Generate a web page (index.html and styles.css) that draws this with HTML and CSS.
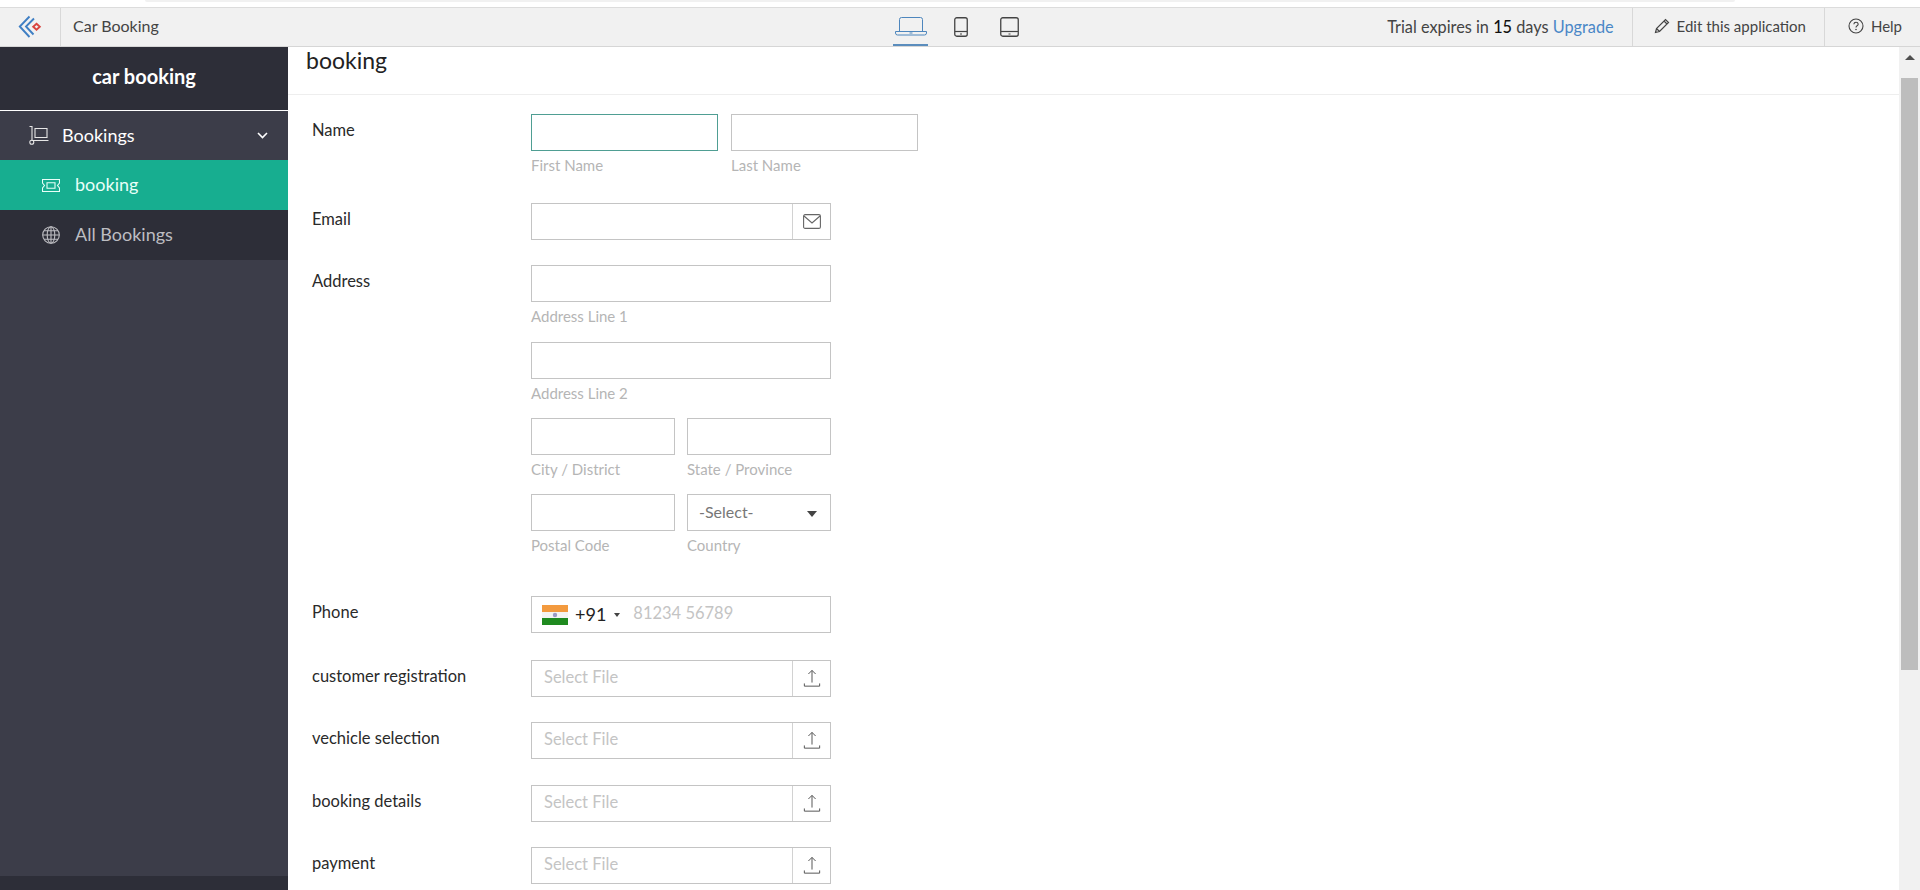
FILE: index.html
```html
<!DOCTYPE html>
<html lang="en">
<head>
    <meta charset="UTF-8">
    <meta name="viewport" content="width=device-width, initial-scale=1.0">
    <title>Car Booking</title>
    <link rel="stylesheet" href="styles.css">
</head>
<body>
    <svg class="defs" width="0" height="0">
        <symbol id="upload" viewBox="0 0 20 20">
            <path d="M10 1V14.500M6 5L10 1 14 5M1.500 15.500v3h17v-3" fill="none" stroke="currentColor" stroke-width="1.100"/>
        </symbol>
    </svg>

    <div class="topstrip"><div class="topstrip-shade"></div></div>

    <header class="toolbar">
        <div class="toolbar-left">
            <a class="logo">
                <svg width="24" height="24" viewBox="0 0 24 24">
                    <path d="M11.500 1.500L1.800 11.500l9.700 10.500" fill="none" stroke="#3f7fc4" stroke-width="1.900"/>
                    <path d="M16 3.500L8 11.500l7.500 8" fill="none" stroke="#3f7fc4" stroke-width="1.900"/>
                    <path d="M18.500 8.800l3.300 3-3.300 3-3.300-3z" fill="none" stroke="#d9443f" stroke-width="1.900"/>
                </svg>
            </a>
            <span class="app-name">Car Booking</span>
        </div>
        <div class="devices">
            <a class="device active">
                <svg width="32" height="19" viewBox="0 0 32 19">
                    <path d="M4.500 14V2.500q0-2 2-2h19q2 0 2 2V14" fill="none" stroke="#4d86bd" stroke-width="1"/>
                    <path d="M.5 14.500h31v1.500q0 2-2 2h-27q-2 0-2-2z" fill="none" stroke="#4d86bd" stroke-width="1"/>
                    <path d="M14.500 15.500h3v1h-3z" fill="#4d86bd"/>
                </svg>
            </a>
            <a class="device device-phone">
                <svg width="14" height="20" viewBox="0 0 14 20">
                    <rect x=".75" y=".75" width="12.500" height="18.500" rx="2" fill="none" stroke="#444" stroke-width="1.300"/>
                    <path d="M1 14.500h12" stroke="#444" stroke-width="1.200"/>
                    <path d="M6 16.500h2v1H6z" fill="#444"/>
                </svg>
            </a>
            <a class="device">
                <svg width="19" height="20" viewBox="0 0 19 20">
                    <rect x=".75" y=".75" width="17.500" height="18.500" rx="2" fill="none" stroke="#444" stroke-width="1.300"/>
                    <path d="M1 14.500h17" stroke="#444" stroke-width="1.200"/>
                    <path d="M8.500 16.500h2v1h-2z" fill="#444"/>
                </svg>
            </a>
        </div>
        <div class="toolbar-right">
            <div class="trial">Trial expires in <b>15</b> days <a class="upgrade">Upgrade</a></div>
            <a class="tool-btn edit">
                <svg width="16" height="16" viewBox="0 0 16 16">
                    <path d="M1.500 14.500l1-4L11.500 1.500l3 3-9 9zM2.500 10.500l3 3M10 3l3 3" fill="none" stroke="#444" stroke-width="1.200"/>
                </svg>
                Edit this application
            </a>
            <a class="tool-btn help">
                <svg width="16" height="16" viewBox="0 0 16 16">
                    <circle cx="8" cy="8" r="7" fill="none" stroke="#444" stroke-width="1.100"/>
                    <path d="M5.800 6.300q.2-2 2.200-2t2.200 1.800q0 1-1.100 1.700T8 9.500" fill="none" stroke="#444" stroke-width="1.100"/>
                    <circle cx="8" cy="11.500" r=".8" fill="#444"/>
                </svg>
                Help
            </a>
        </div>
    </header>

    <div class="layout">
        <aside class="sidebar">
            <div class="side-title">car booking</div>
            <a class="side-group">
                <svg width="20" height="19" viewBox="0 0 20 19">
                    <path d="M.5 .5h2.500V15M3 14.500h16.500M6 2.500h12v9H6z" fill="none" stroke="#e6e6e6" stroke-width="1.100"/>
                    <circle cx="2.800" cy="16.300" r="2" fill="none" stroke="#e6e6e6" stroke-width="1.100"/>
                </svg>
                <span>Bookings</span>
                <svg class="chev" width="11" height="7" viewBox="0 0 11 7">
                    <path d="M1 1l4.500 4.500L10 1" fill="none" stroke="#fff" stroke-width="1.600"/>
                </svg>
            </a>
            <a class="side-item current">
                <svg width="18" height="13" viewBox="0 0 18 13">
                    <path d="M.5 .5h17v3.500l-2 2.500 2 2.500v3.500H.5V9l2-2.500L.5 4z" fill="none" stroke="#e8fff8" stroke-width="1.100"/>
                    <path d="M5 3.800h8v5.400H5z" fill="none" stroke="#e8fff8" stroke-width="1.100"/>
                </svg>
                <span>booking</span>
            </a>
            <a class="side-item">
                <svg width="18" height="18" viewBox="0 0 18 18">
                    <g fill="none" stroke="#bdbdc2" stroke-width="1.100">
                        <circle cx="9" cy="9" r="8.300"/>
                        <ellipse cx="9" cy="9" rx="3.800" ry="8.300"/>
                        <path d="M9 .7v16.600M.7 9h16.600M2 4.800h14M2 13.200h14"/>
                    </g>
                </svg>
                <span>All Bookings</span>
            </a>
            <div class="side-fill"></div>
            <div class="side-foot"></div>
        </aside>

        <main class="content">
            <div class="page">
                <h1 class="page-title">booking</h1>
                <form class="form">
                    <div class="row row-name">
                        <label class="lbl">Name</label>
                        <div class="cols cols-wide">
                            <div>
                                <input class="box is-focus" type="text">
                                <div class="sub">First Name</div>
                            </div>
                            <div>
                                <input class="box" type="text">
                                <div class="sub">Last Name</div>
                            </div>
                        </div>
                    </div>

                    <div class="row row-email">
                        <label class="lbl">Email</label>
                        <div class="group">
                            <input type="text">
                            <span class="addon addon-mail">
                                <svg width="18" height="15" viewBox="0 0 18 15">
                                    <rect x=".6" y=".6" width="16.800" height="13.800" rx="1.500" fill="none" stroke="#666" stroke-width="1.100"/>
                                    <path d="M1 2l8 7 8-7" fill="none" stroke="#666" stroke-width="1.100"/>
                                </svg>
                            </span>
                        </div>
                    </div>

                    <div class="row row-address">
                        <label class="lbl">Address</label>
                        <div class="address">
                            <div class="addr-line">
                                <input class="box" type="text">
                                <div class="sub">Address Line 1</div>
                            </div>
                            <div class="addr-line">
                                <input class="box" type="text">
                                <div class="sub">Address Line 2</div>
                            </div>
                            <div class="addr-line cols">
                                <div>
                                    <input class="box" type="text">
                                    <div class="sub">City / District</div>
                                </div>
                                <div>
                                    <input class="box" type="text">
                                    <div class="sub">State / Province</div>
                                </div>
                            </div>
                            <div class="addr-line cols">
                                <div>
                                    <input class="box" type="text">
                                    <div class="sub">Postal Code</div>
                                </div>
                                <div>
                                    <div class="select">-Select-<span class="caret"></span></div>
                                    <div class="sub">Country</div>
                                </div>
                            </div>
                        </div>
                    </div>

                    <div class="row row-phone">
                        <label class="lbl">Phone</label>
                        <div class="group">
                            <span class="flag">
                                <svg width="26" height="20" viewBox="0 0 26 20">
                                    <rect width="26" height="7" fill="#f39a3e"/>
                                    <rect y="7" width="26" height="6" fill="#f4f4f4"/>
                                    <rect y="13" width="26" height="7" fill="#1f8a20"/>
                                    <circle cx="13" cy="10" r="2.200" fill="#9a9ac4"/>
                                </svg>
                            </span>
                            <span class="dial">+91</span>
                            <span class="dial-caret"></span>
                            <input class="phone-input" type="text" placeholder="81234 56789">
                        </div>
                    </div>

                    <div class="row row-file">
                        <label class="lbl">customer registration</label>
                        <div class="group">
                            <input class="file-input" type="text" placeholder="Select File">
                            <span class="addon"><svg width="18" height="19"><use href="#upload"/></svg></span>
                        </div>
                    </div>
                    <div class="row row-file">
                        <label class="lbl">vechicle selection</label>
                        <div class="group">
                            <input class="file-input" type="text" placeholder="Select File">
                            <span class="addon"><svg width="18" height="19"><use href="#upload"/></svg></span>
                        </div>
                    </div>
                    <div class="row row-file">
                        <label class="lbl">booking details</label>
                        <div class="group">
                            <input class="file-input" type="text" placeholder="Select File">
                            <span class="addon"><svg width="18" height="19"><use href="#upload"/></svg></span>
                        </div>
                    </div>
                    <div class="row row-file">
                        <label class="lbl">payment</label>
                        <div class="group">
                            <input class="file-input" type="text" placeholder="Select File">
                            <span class="addon"><svg width="18" height="19"><use href="#upload"/></svg></span>
                        </div>
                    </div>
                </form>
            </div>
            <div class="scrollbar">
                <span class="scroll-up"></span>
                <div class="scroll-thumb"></div>
            </div>
        </main>
    </div>
</body>
</html>
```

FILE: styles.css
```css
* {
    box-sizing: border-box;
}

html, body {
    height: 100%;
}

body {
    margin: 0;
    display: flex;
    flex-direction: column;
    overflow: hidden;
    font-family: Lato, "Open Sans", sans-serif;
    font-size: 15px;
    color: #222;
    background-color: #fff;
}

.defs {
    display: none;
}

/* strip above the toolbar */
.topstrip {
    flex: 0 0 8px;
    border-bottom: 1px solid #dcdcdc;
    background-color: #fff;
}

.topstrip-shade {
    height: 2px;
    margin: 0 185px 0 145px;
    background-color: #f1f1f1;
    border-radius: 0 0 6px 6px;
}

/* toolbar */
.toolbar {
    flex: 0 0 39px;
    display: flex;
    background-color: #f1f1f1;
    border-bottom: 1px solid #d6d6d6;
    color: #444;
}

.toolbar-left {
    flex: 0 0 893px;
    display: flex;
    align-items: center;
}

.logo {
    width: 61px;
    height: 100%;
    display: flex;
    align-items: center;
    justify-content: center;
    border-right: 1px solid #d8d8d8;
}

.app-name {
    margin-left: 12px;
    font-size: 16px;
    padding-bottom: 3px;
}

.devices {
    display: flex;
    align-items: center;
    height: 100%;
}

.device {
    height: 100%;
    display: flex;
    align-items: center;
    margin-right: 26px;
}

.device-phone {
    margin-right: 32px;
}

.device.active {
    width: 35px;
    justify-content: center;
    border-bottom: 2px solid #5b8dbd;
}

.toolbar-right {
    margin-left: auto;
    display: flex;
    align-items: center;
}

.trial {
    padding-right: 18px;
    font-size: 16.300px;
    padding-bottom: 1px;
}

.trial b {
    font-weight: 500;
    color: #111;
}

.upgrade {
    color: #4a87c7;
}

.tool-btn {
    height: 100%;
    display: flex;
    align-items: center;
    gap: 7px;
    border-left: 1px solid #d8d8d8;
    padding-bottom: 2px;
}

.edit {
    padding-left: 21px;
    padding-right: 18px;
}

.help {
    padding-left: 23px;
    padding-right: 18px;
}

/* main layout */
.layout {
    flex: 1;
    display: flex;
    min-height: 0;
}

.sidebar {
    flex: 0 0 288px;
    display: flex;
    flex-direction: column;
    background-color: #3c3d49;
    color: #fff;
    font-size: 18px;
}

.side-title {
    flex: 0 0 64px;
    padding-top: 17px;
    text-align: center;
    font-size: 20px;
    font-weight: 700;
    background-color: #2d2e38;
    border-bottom: 1px solid #fff;
}

.side-group {
    flex: 0 0 49px;
    display: flex;
    align-items: center;
    padding: 0 20px 0 29px;
    gap: 13px;
}

.side-group span,
.side-item span {
    position: relative;
    top: -1px;
}

.chev {
    margin-left: auto;
}

.side-item {
    flex: 0 0 50px;
    display: flex;
    align-items: center;
    padding-left: 42px;
    gap: 15px;
    background-color: #2d2e38;
    color: #bdbdc2;
}

.side-item.current {
    background-color: #17ae90;
    color: #e8fff8;
}

.side-fill {
    flex: 1;
}

.side-foot {
    flex: 0 0 14px;
    background-color: #2d2e38;
}

/* content */
.content {
    flex: 1;
    display: flex;
    min-width: 0;
    overflow: hidden;
}

.page {
    flex: 1;
    min-width: 0;
}

.page-title {
    margin: 0;
    height: 48px;
    padding: 0 0 0 18px;
    font-size: 23px;
    font-weight: 400;
    line-height: 26px;
    color: #222;
    border-bottom: 1px solid #eee;
}

.form {
    padding: 19px 0 0 24px;
}

.row {
    display: flex;
    align-items: flex-start;
}

.lbl {
    flex: 0 0 219px;
    padding-top: 6px;
    line-height: 20px;
    font-size: 16.500px;
    color: #2a2a2a;
}

.row-name {
    margin-bottom: 28px;
}

.row-email {
    margin-bottom: 25px;
}

.row-address {
    margin-bottom: 41px;
}

.row-phone {
    margin-bottom: 27px;
}

.row-file {
    margin-bottom: 25.300px;
}

.cols {
    display: grid;
    grid-template-columns: 144px 144px;
    gap: 12px;
}

.cols-wide {
    grid-template-columns: 187px 187px;
    gap: 13px;
}

.address {
    width: 300px;
}

.addr-line {
    margin-bottom: 15.500px;
}

.addr-line:nth-child(3) {
    margin-bottom: 15px;
}

.addr-line:last-child {
    margin-bottom: 0;
}

input {
    font-family: inherit;
    font-size: 16.500px;
    color: #222;
    outline: none;
}

input::placeholder {
    color: #c4c4c4;
    opacity: 1;
}

.box {
    display: block;
    width: 100%;
    height: 37px;
    border: 1px solid #c4c4c4;
    border-radius: 0;
    padding: 0 10px;
}

.box.is-focus {
    border-color: #4f9e93;
}

.sub {
    margin-top: 5px;
    line-height: 19px;
    font-size: 15px;
    color: #b5b5b5;
}

.select {
    position: relative;
    height: 37px;
    padding: 0 11px;
    line-height: 33px;
    border: 1px solid #c4c4c4;
    font-size: 16px;
    color: #777;
}

.caret {
    position: absolute;
    right: 13px;
    top: 16px;
    border-left: 5px solid transparent;
    border-right: 5px solid transparent;
    border-top: 6px solid #444;
}

.group {
    width: 300px;
    height: 37px;
    display: flex;
    align-items: center;
    border: 1px solid #c4c4c4;
}

.group input {
    flex: 1;
    min-width: 0;
    height: 100%;
    border: 0;
    background: transparent;
}

.addon {
    flex: 0 0 38px;
    height: 100%;
    display: flex;
    align-items: center;
    justify-content: center;
    border-left: 1px solid #d2d2d2;
    color: #555;
}

.file-input {
    padding: 0 12px 3px;
}

.flag {
    display: flex;
    margin-left: 10px;
}

.dial {
    margin-left: 7px;
    font-size: 18px;
    color: #222;
    padding-bottom: 2px;
}

.dial-caret {
    margin-left: 8px;
    border-left: 3px solid transparent;
    border-right: 3px solid transparent;
    border-top: 4px solid #444;
}

.phone-input {
    padding: 0 0 3px 13px;
}

/* scrollbar */
.scrollbar {
    position: relative;
    flex: 0 0 21px;
    background-color: #f1f1f1;
}

.scroll-up {
    position: absolute;
    top: 8px;
    left: 6px;
    border-left: 5px solid transparent;
    border-right: 5px solid transparent;
    border-bottom: 5px solid #505050;
}

.scroll-thumb {
    position: absolute;
    top: 31px;
    left: 2px;
    right: 2px;
    height: 592px;
    background-color: #bdbdbd;
}
```
